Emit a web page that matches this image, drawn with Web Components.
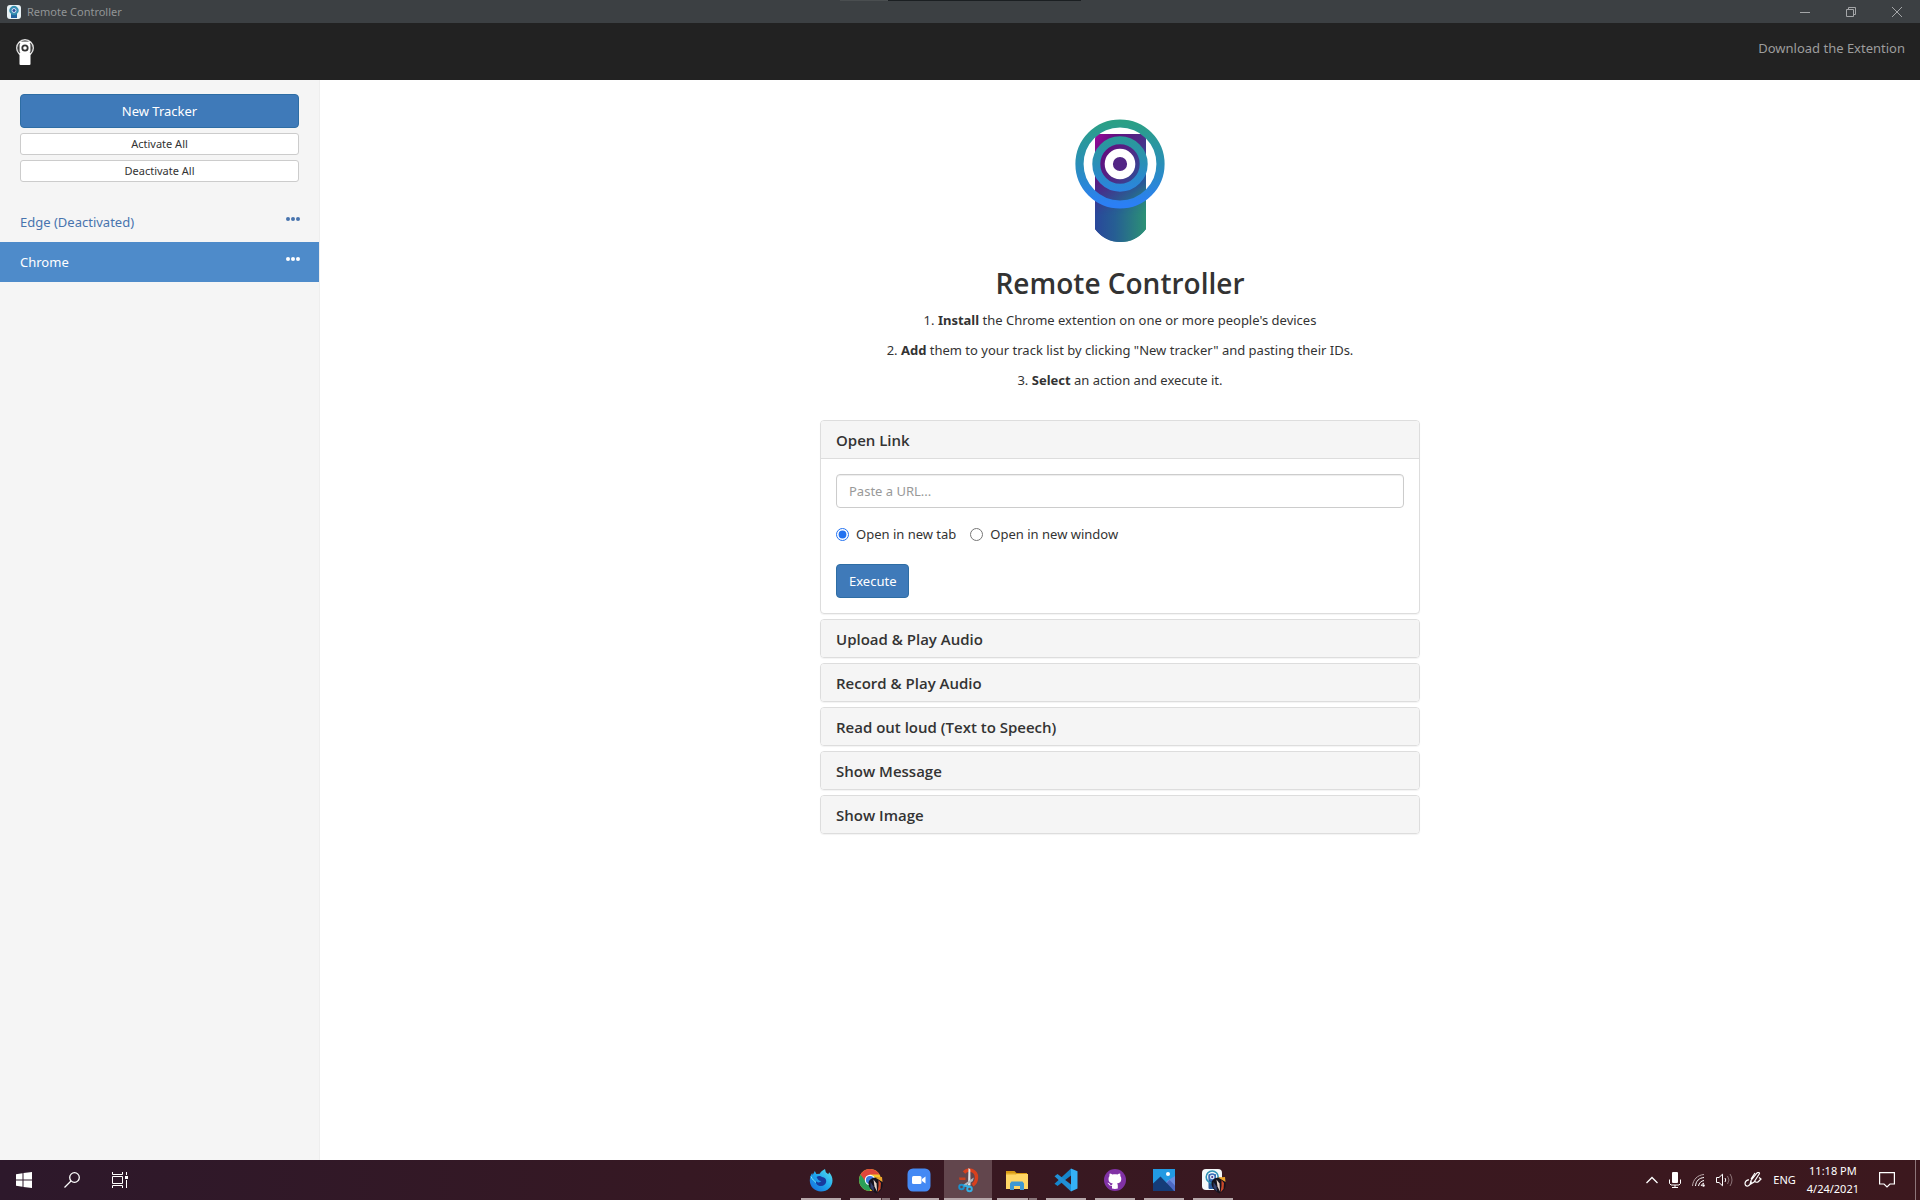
<!DOCTYPE html>
<html lang="en">
<head>
<meta charset="utf-8">
<title>Remote Controller</title>
<style>
  html, body {
    height: 100%;
    margin: 0;
  }

  body {
    font: 13px/20px "Noto Sans", "Open Sans", sans-serif;
    color: #333;
    background: #fff;
  }
</style>
</head>
<body>
<remote-app>
  <title-bar slot="top">Remote Controller</title-bar>
  <nav-bar slot="top">Download the Extention</nav-bar>

  <tracker-sidebar slot="side">
    <tracker-item>Edge (Deactivated)</tracker-item>
    <tracker-item active>Chrome</tracker-item>
  </tracker-sidebar>

  <app-intro></app-intro>
  <panel-group>
    <action-panel open heading="Open Link"><link-form></link-form></action-panel>
    <action-panel heading="Upload &amp; Play Audio"></action-panel>
    <action-panel heading="Record &amp; Play Audio"></action-panel>
    <action-panel heading="Read out loud (Text to Speech)"></action-panel>
    <action-panel heading="Show Message"></action-panel>
    <action-panel heading="Show Image"></action-panel>
  </panel-group>

  <task-bar slot="bottom">
    <task-button icon="firefox" label="Firefox"></task-button>
    <task-button icon="chrome" label="Chrome" stacked></task-button>
    <task-button icon="zoom" label="Zoom"></task-button>
    <task-button icon="snip" label="Snip" active></task-button>
    <task-button icon="explorer" label="File Explorer" stacked></task-button>
    <task-button icon="vscode" label="Visual Studio Code"></task-button>
    <task-button icon="github" label="GitHub Desktop"></task-button>
    <task-button icon="photos" label="Photos"></task-button>
    <task-button icon="remote" label="Remote Controller"></task-button>
  </task-bar>
</remote-app>

<script>
/* The little profile picture that Chrome puts over its icons */
const avatar = `
  <path d="M10.500 15.500c0-4 3.500-5.500 7-6 4-.5 7.500 2.500 7.200 7.500-.2 4-3 7-6.200 8.500-3-1.500-8-5-8-10z" fill="#15121d"/>
  <path d="M17 9.500l7-.5.5 5-4-2.500z" fill="#eda42b"/>
  <path d="M20.500 12l2.500 3-.5 6-3 3.500 1-6.500z" fill="#c9482a"/>
  <path d="M15.500 11.500l3 4 .5 8-2.500-5z" fill="#e6d5cd"/>
  <path d="M12.500 14l3 4.500.5 5-3.500-4z" fill="#34406f"/>`;

const icons = {
  firefox: `
    <defs><linearGradient id="ff" x1="1" y1="0" x2="0" y2="1"><stop offset="0" stop-color="#5be3ee"/><stop offset=".5" stop-color="#1fa6ee"/><stop offset="1" stop-color="#1565d8"/></linearGradient></defs>
    <path d="M12 23.500C5.600 23.500.8 18.800.8 12.600c0-3 1-5.600 2.400-7.500l.5 2L5.800 3l1.600 3 3.300-.2C11.800 3.800 13.800 2.200 16 1l.8 3.200 2.500 2 .8-2C22.500 6.800 23.500 9.500 23.500 12.500c0 6.200-5 11-11.500 11z" fill="url(#ff)"/>
    <path d="M7.500 9c2-1.600 4.200-1.300 5.500 0 3 .2 4.500 2.200 4.200 4.700-.4 2.600-2.500 4.300-5.200 4.300-3 0-5.200-2-5.200-4.800l1.700 1c1.500.6 3-.1 3.800-1.200-2 .2-3.300-.8-4.800-4z" fill="#173a9e"/>
    <path d="M2 8.500c1.500 3.500 3 4 5 6" fill="none" stroke="#7beef5" stroke-width="1"/>`,
  chrome: `
    <circle cx="12" cy="12" r="11" fill="#f3c62c"/>
    <path d="M2.500 6.500A11 11 0 0 0 11.500 23l5-8.300L12 12z" fill="#2b9f58"/>
    <path d="M2.500 6.500L8 14l4-7.400H21.500A11 11 0 0 0 2.500 6.500z" fill="#e0463a"/>
    <circle cx="12" cy="12" r="5.200" fill="#fff"/><circle cx="12" cy="12" r="4.100" fill="#3c78dc"/>${avatar}`,
  zoom: `
    <rect x=".5" y=".5" width="23" height="23" rx="5.500" fill="#4489f4"/>
    <rect x="5" y="8" width="9.500" height="8" rx="1.500" fill="#fff"/>
    <path d="M15 11l3.500-2.500v7L15 13z" fill="#fff"/>`,
  snip: `
    <path d="M8 4.500C13-.5 20.500 3 20.500 9.500c0 3.500-1.500 6-4 7.500" fill="none" stroke="#d8401d" stroke-width="3.400"/>
    <path d="M3 9.500h6.500v2.500H3.500z" fill="#c9411f"/>
    <path d="M12.500 0l1.800 1.500.2 16h-2.500z" fill="#e2e5e8"/>
    <path d="M17.800 9.500l-1 3.500-8.300 5.500-1.500-1.500z" fill="#aeb7bf"/>
    <circle cx="5.500" cy="19" r="2.300" fill="none" stroke="#1c91cd" stroke-width="1.900"/>
    <circle cx="13.500" cy="21" r="2.300" fill="none" stroke="#35b0e4" stroke-width="1.900"/>
    <path d="M7.500 17.500l5.500 1" stroke="#35b0e4" stroke-width="2"/>`,
  explorer: `
    <path d="M1 3h8.500l2 2H22v3H1z" fill="#d99a15"/>
    <rect x="1" y="6" width="22" height="15" fill="#ffd666"/>
    <path d="M1 5h9l1.500 1.500H1z" fill="#e5ae2b"/>
    <path d="M5 22v-6.500l1.500-2h11l1.500 2V22h-4v-4H9v4z" fill="#3e98d3"/>`,
  vscode: `
    <path d="M17 .5v7L3.500 18 .5 15.800z" fill="#1586cc"/>
    <path d="M17 23.500v-7L3.500 6 .5 8.200z" fill="#2190d6"/>
    <path d="M17 .5v23l6.500-3V3.200z" fill="#35b0f5"/>`,
  github: `
    <circle cx="12" cy="12" r="11" fill="#8132a5"/>
    <path d="M9 20.600v-2.900c-2.200.4-2.900-.7-3.400-1.700-.3-.5-.7-.9-1.100-1.100 1.300-.3 2 .8 2.500 1.500.6.800 1.300.7 2.100.4.100-.7.400-1.100.7-1.400-2.600-.3-4.300-1.500-4.300-4.500 0-1.200.4-2.100 1-2.800-.2-.8-.2-1.800.2-2.700 1 0 1.900.5 2.700 1.100 1.600-.5 3.400-.5 5 0 .8-.6 1.700-1.100 2.700-1.100.4.900.4 1.900.2 2.700.7.700 1 1.600 1 2.800 0 3-1.700 4.200-4.300 4.500.5.500.8 1.100.8 2v3.200A9 9 0 0 1 9 20.600z" fill="#fff"/>`,
  photos: `
    <rect x="1" y="1" width="22" height="22" fill="#229ae3"/>
    <path d="M15 13l8-5v15H10z" fill="#6a8de0"/>
    <path d="M13 17l4.500-5 5.500 5.500V23h-9z" fill="#4d69c4"/>
    <path d="M1 15.500L8.500 8.500 19 19.500 22 23H1z" fill="#153c78"/>
    <circle cx="16" cy="6" r="2" fill="#fff"/>`,
  remote: `
    <rect x="1" y="1" width="20" height="21" rx="4" fill="#f4f8fa"/>
    <rect x="7.500" y="6" width="7.500" height="15" rx="1" fill="#2b5c9f"/>
    <circle cx="11.200" cy="9" r="6" fill="none" stroke="#2e91b5" stroke-width="1.600"/>
    <circle cx="11.200" cy="9" r="3" fill="#d7e7f4" stroke="#3a6eba" stroke-width="1.300"/>
    <circle cx="11.200" cy="9" r="1" fill="#4c2b86"/>${avatar}`,
};

function define(name, html, setup) {
  const template = document.createElement('template');
  template.innerHTML = html;

  customElements.define(name, class extends HTMLElement {
    constructor() {
      super();
      this.attachShadow({ mode: 'open' }).appendChild(template.content.cloneNode(true));
    }

    connectedCallback() {
      if (setup) setup(this, this.shadowRoot);
    }
  });
}

define('remote-app', `
  <style>
    :host {
      display: flex;
      flex-direction: column;
      min-height: 100vh;
    }

    .content {
      display: flex;
      flex: 1;
    }

    main {
      flex: 1;
      display: flex;
      flex-direction: column;
      align-items: center;
      padding: 39px 20px;
    }
  </style>
  <slot name="top"></slot>
  <div class="content">
    <slot name="side"></slot>
    <main><slot></slot></main>
  </div>
  <slot name="bottom"></slot>
`);

define('title-bar', `
  <style>
    :host {
      display: flex;
      align-items: center;
      height: 23px;
      padding-left: 7px;
      font-size: 11px;
      color: #929596;
      background: #3c4043;
    }

    .title {
      flex: 1;
      margin-left: 6px;
    }

    button {
      display: flex;
      justify-content: center;
      width: 46px;
      height: 20px;
      padding: 5px 0;
      border: 0;
      background: none;
      color: #a4a6a8;
    }

    /* sliver of the window behind */
    .edge {
      position: absolute;
      top: 0;
      left: 50%;
      width: 241px;
      height: 1px;
      margin-left: -120px;
      background: linear-gradient(90deg, #4a4e50 48px, #1b1f22 48px);
    }
  </style>
  <span class="edge"></span>
  <svg width="14" height="14" viewBox="0 0 14 14">
    <rect width="14" height="14" rx="3" fill="#e8f1f5"/>
    <rect x="4" y="3" width="6" height="10" fill="#23629f"/>
    <circle cx="7" cy="5.500" r="4.200" fill="#3c8cb4" stroke="#2b91ad" stroke-width="1"/>
    <circle cx="7" cy="5.500" r="2" fill="#304e9f" stroke="#d4e3f2" stroke-width="1"/>
  </svg>
  <span class="title"><slot></slot></span>
  <button aria-label="Minimize"><svg width="10" height="10" fill="none" stroke="currentColor"><path d="M0 5.500h10"/></svg></button>
  <button aria-label="Restore"><svg width="10" height="10" fill="none" stroke="currentColor"><path d="M.5 2.500h7v7h-7zM2.500 2.500v-2h7v7h-2"/></svg></button>
  <button aria-label="Close"><svg width="10" height="10" fill="none" stroke="currentColor"><path d="M0 0l10 10M10 0L0 10"/></svg></button>
`);

define('nav-bar', `
  <style>
    :host {
      display: flex;
      justify-content: space-between;
      height: 57px;
      padding: 0 15px;
      box-sizing: border-box;
      background: #222;
    }

    a {
      padding-top: 15px;
      color: #9d9d9d;
      text-decoration: none;
    }
  </style>
  <a href="#" aria-label="Home">
    <svg width="20" height="28" viewBox="0 0 20 28">
      <circle cx="10" cy="10" r="8.200" fill="none" stroke="#dedede" stroke-width="1.600"/>
      <rect x="4.500" y="3.500" width="11" height="23.500" rx="1" fill="#fff"/>
      <path d="M5 5a7 7 0 0 0 0 10M15 5a7 7 0 0 1 0 10" fill="none" stroke="#555" stroke-width="1"/>
      <circle cx="10" cy="10" r="2.700" fill="#fff" stroke="#333" stroke-width="1.800"/>
    </svg>
  </a>
  <a href="#"><slot></slot></a>
`);

define('tracker-sidebar', `
  <style>
    :host {
      display: block;
      width: 319px;
      padding-top: 14px;
      background: #f5f5f5;
      border-right: 1px solid #eee;
    }

    .buttons {
      display: grid;
      gap: 5px;
      padding: 0 20px 20px;
    }

    button {
      font: inherit;
      font-size: 11px;
      line-height: 20px;
      height: 22px;
      padding: 0;
      color: #333;
      background: #fff;
      border: 1px solid #ccc;
      border-radius: 3px;
    }

    .primary {
      height: 34px;
      font-size: 13px;
      color: #fff;
      background: #3f7ab9;
      border-color: #2e6da4;
      border-radius: 4px;
    }
  </style>
  <div class="buttons">
    <button class="primary">New Tracker</button>
    <button>Activate All</button>
    <button>Deactivate All</button>
  </div>
  <nav><slot></slot></nav>
`);

define('tracker-item', `
  <style>
    :host {
      display: flex;
      justify-content: space-between;
      align-items: flex-start;
      padding: 10px 19px 10px 20px;
      color: #4874ae;
    }

    :host([active]) {
      color: #fff;
      background: #4e8bca;
    }

    a {
      flex: 1;
      color: inherit;
      text-decoration: none;
    }

    button {
      display: block;
      padding: 5px 0;
      border: 0;
      color: inherit;
      background: none;
    }

    svg {
      display: block;
    }
  </style>
  <a href="#"><slot></slot></a>
  <button aria-label="Tracker options">
    <svg width="14" height="4" fill="currentColor"><circle cx="2" cy="2" r="2"/><circle cx="7" cy="2" r="2"/><circle cx="12" cy="2" r="2"/></svg>
  </button>
`);

define('app-intro', `
  <style>
    :host {
      display: block;
      text-align: center;
      margin-bottom: 30px;
    }

    svg {
      display: block;
      margin: 0 auto 24px;
    }

    h2 {
      margin: 0 0 10px;
      font: 600 28px/33px "Open Sans", sans-serif;
    }

    ol {
      display: grid;
      gap: 10px;
      margin: 0;
      padding: 0;
      list-style: decimal inside;
    }
  </style>
  <svg width="90" height="124" viewBox="0 0 90 124">
    <defs>
      <linearGradient id="ring" gradientUnits="userSpaceOnUse" x1="0" y1="4" x2="0" y2="86"><stop offset="0" stop-color="#2b9f86"/><stop offset=".5" stop-color="#2a8fb8"/><stop offset="1" stop-color="#2b7ff5"/></linearGradient>
      <linearGradient id="body" x1="0" y1="0" x2=".7" y2="1"><stop offset="0" stop-color="#a0089c"/><stop offset=".2" stop-color="#611080"/><stop offset=".45" stop-color="#4e2b86"/><stop offset=".72" stop-color="#29539a"/><stop offset="1" stop-color="#2a8a80"/></linearGradient>
      <linearGradient id="foot" x1="0" y1="0" x2="1" y2="0"><stop offset="0" stop-color="#29479b"/><stop offset=".4" stop-color="#265f93"/><stop offset="1" stop-color="#2c9175"/></linearGradient>
      <linearGradient id="fade" x1="0" y1="0" x2="0" y2="1"><stop offset=".45" stop-color="#fff" stop-opacity="0"/><stop offset=".75" stop-color="#fff"/></linearGradient>
      <mask id="low"><rect x="19" y="14" width="53" height="110" fill="url(#fade)"/></mask>
    </defs>
    <path d="M20 20q0-5 5-5h41q5 0 5 5v90q-10 13-25.500 13T20 110z" fill="url(#body)"/>
    <path d="M20 20q0-5 5-5h41q5 0 5 5v90q-10 13-25.500 13T20 110z" fill="url(#foot)" mask="url(#low)"/>
    <circle cx="45" cy="45" r="40.500" fill="none" stroke="url(#ring)" stroke-width="8.200"/>
    <circle cx="45" cy="45" r="23.700" fill="none" stroke="url(#ring)" stroke-width="8"/>
    <circle cx="45" cy="45" r="11.200" fill="#522585" stroke="#fff" stroke-width="8.200"/>
  </svg>
  <h2>Remote Controller</h2>
  <ol>
    <li><b>Install</b> the Chrome extention on one or more people's devices</li>
    <li><b>Add</b> them to your track list by clicking "New tracker" and pasting their IDs.</li>
    <li><b>Select</b> an action and execute it.</li>
  </ol>
`);

define('panel-group', `
  <style>
    :host {
      display: grid;
      gap: 5px;
      width: 100%;
      max-width: 600px;
    }
  </style>
  <slot></slot>
`);

define('action-panel', `
  <style>
    :host {
      display: block;
      border: 1px solid #ddd;
      border-radius: 4px;
      box-shadow: 0 1px 1px rgba(0, 0, 0, .05);
      overflow: hidden;
    }

    h4 {
      margin: 0;
      font: 600 15px/18px "Open Sans", sans-serif;
      background: #f5f5f5;
    }

    button {
      display: block;
      width: 100%;
      padding: 10px 15px 9px;
      border: 0;
      font: inherit;
      color: inherit;
      text-align: left;
      background: none;
    }

    .body {
      display: none;
      padding: 15px;
      border-top: 1px solid #ddd;
    }

    :host([open]) .body {
      display: block;
    }
  </style>
  <h4><button></button></h4>
  <div class="body"><slot></slot></div>
`, (host, root) => {
  const button = root.querySelector('button');
  button.textContent = host.getAttribute('heading');
  button.onclick = () => host.toggleAttribute('open');
});

define('link-form', `
  <style>
    :host {
      display: block;
    }

    #url {
      display: block;
      width: 100%;
      height: 34px;
      padding: 6px 12px;
      box-sizing: border-box;
      font: inherit;
      color: #555;
      border: 1px solid #ccc;
      border-radius: 4px;
      box-shadow: inset 0 1px 1px rgba(0, 0, 0, .075);
    }

    #url::placeholder {
      color: #999;
    }

    .options {
      display: flex;
      gap: 14px;
      padding: 16px 0 20px;
    }

    label {
      display: flex;
      align-items: center;
      gap: 7px;
    }

    [type=radio] {
      width: 13px;
      height: 13px;
      margin: 0;
      accent-color: #2372f0;
    }

    button {
      height: 34px;
      padding: 0 12px;
      font: inherit;
      color: #fff;
      background: #3f7ab9;
      border: 1px solid #2e6da4;
      border-radius: 4px;
    }
  </style>
  <input id="url" type="text" placeholder="Paste a URL..." aria-label="URL">
  <div class="options">
    <label><input type="radio" name="target" checked>Open in new tab</label>
    <label><input type="radio" name="target">Open in new window</label>
  </div>
  <button>Execute</button>
`);

define('task-bar', `
  <style>
    :host {
      display: flex;
      height: 40px;
      color: #fff;
      background: linear-gradient(90deg, #2d182b, #371822 40%, #3c181e);
    }

    button {
      display: flex;
      align-items: center;
      justify-content: center;
      width: 48px;
      padding: 0;
      border: 0;
      color: #fff;
      background: none;
    }

    .start {
      display: flex;
      flex: 7;
    }

    .tasks {
      display: flex;
      gap: 1px;
    }

    .tray {
      display: flex;
      flex: 6;
      align-items: center;
      justify-content: flex-end;
      gap: 11px;
      font-size: 11px;
    }

    .clock {
      line-height: 18px;
      text-align: center;
    }

    .tray .notes {
      width: 34px;
      height: 100%;
    }

    .desktop {
      width: 4px;
      height: 100%;
      border-left: 1px solid #8d7579;
    }
  </style>
  <div class="start">
    <button aria-label="Start"><svg width="16" height="16" fill="#fff"><path d="M0 2.200L6.500 1.300V7.500H0zM7.500 1.100L16 0v7.500H7.500zM0 8.500h6.500v6.200L0 13.800zM7.500 8.500H16V16l-8.500-1.100z"/></svg></button>
    <button aria-label="Search"><svg width="16" height="16" fill="none" stroke="#fff" stroke-width="1.300"><circle cx="10.500" cy="5.500" r="4.800"/><path d="M7 9L.5 15.500"/></svg></button>
    <button aria-label="Task View"><svg width="16" height="16" fill="none" stroke="#fff"><path d="M.5 4.500v7h10v-7zM.5 0v2.500h10V0M.5 16v-2.500h10V16M14.500 0v3M14.500 8v8"/><path d="M13 4h3v3h-3z" fill="#fff" stroke="none"/></svg></button>
  </div>
  <div class="tasks"><slot></slot></div>
  <div class="tray">
    <svg width="12" height="8" fill="none" stroke="#fff" stroke-width="1.300"><path d="M.5 7L6 1.500 11.500 7"/></svg>
    <svg width="12" height="16" fill="none" stroke="#fff"><rect x="3" y="0" width="6" height="11" rx="1" fill="#fff" stroke="none"/><path d="M.5 7.500v4l1.500 1.500h8l1.500-1.500v-4M6 13v2.500M3 15.500h6"/></svg>
    <svg width="13" height="13" fill="none" stroke="#fff"><path d="M.5 12C1 5.500 5.500 1 12 .500" stroke="#b9a6a9"/><path d="M3.500 12C4 7 7 4 12 3.500M6.500 12C7 9 9 7 12 6.500M9.200 12c.3-1.500 1.300-2.500 2.800-2.800"/><circle cx="11.500" cy="11.500" r="1.200" fill="#fff" stroke="none"/></svg>
    <svg width="17" height="14" fill="none" stroke="#fff"><path d="M.5 4.500h2.500L6.500 1.200v11.600L3 9.500H.5zM9 5q1.500 2 0 4"/><path d="M11.500 3q3 4 0 8M14 1q4 6 0 12" stroke="#8d7579"/></svg>
    <svg width="18" height="16" fill="none" stroke="#fff" stroke-width="1.200"><path d="M6 12.500l1-4L13 1q2-1.500 2.500.5L10 10zM1 11q1-3.500 4-3.200M1 11q0 3.500 3 3 2-.5 3.500-4.500M11 1L7 7M11 9.500q2 1.500 3.500 0t2.500-2.500l-2-1.500"/></svg>
    <span>ENG</span>
    <time class="clock">11:18 PM<br>4/24/2021</time>
    <button class="notes" aria-label="Notifications"><svg width="16" height="16" fill="none" stroke="#fff" stroke-width="1.200"><path d="M.6.600h14.800v11.400H11L8 15 5 12H.6z"/></svg></button>
    <span class="desktop"></span>
  </div>
`);

define('task-button', `
  <style>
    :host {
      display: flex;
    }

    button {
      display: flex;
      align-items: center;
      justify-content: center;
      position: relative;
      width: 48px;
      padding: 0;
      border: 0;
      background: none;
    }

    svg {
      overflow: visible;
    }

    button::after {
      content: "";
      position: absolute;
      right: 4px;
      bottom: 0;
      left: 4px;
      height: 2px;
      background: #b6a7aa;
    }

    :host([stacked]) button::after {
      background: linear-gradient(90deg, #b6a7aa 31px, #4b2e33 31px 32px, #8a777b 32px);
    }

    :host([active]) button {
      background: #62464d;
    }

    :host([active]) button::after {
      right: 0;
      left: 0;
    }
  </style>
  <button><svg width="24" height="24" viewBox="0 0 24 24"></svg></button>
`, (host, root) => {
  root.querySelector('button').setAttribute('aria-label', host.getAttribute('label'));
  root.querySelector('svg').innerHTML = icons[host.getAttribute('icon')];
});
</script>
</body>
</html>
